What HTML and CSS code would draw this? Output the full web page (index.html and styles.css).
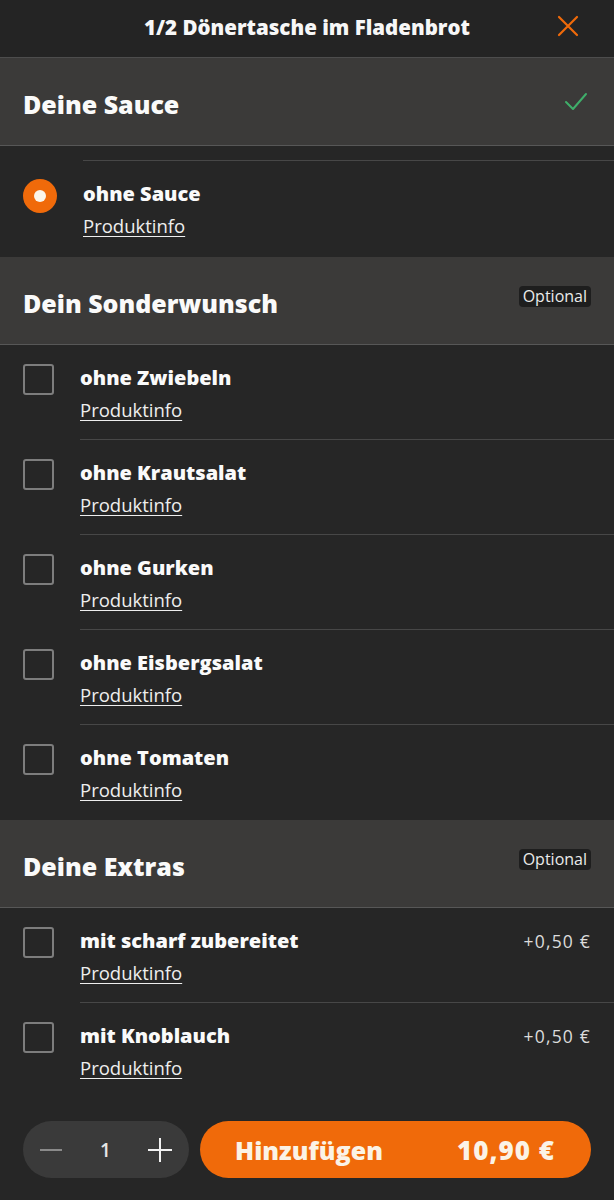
FILE: index.html
```html
<!DOCTYPE html>
<html lang="de">
<head>
<meta charset="utf-8">
<title>1/2 Dönertasche im Fladenbrot</title>
<link rel="stylesheet" href="styles.css">
</head>
<body>
<div class="app">
  <header class="topbar">
    <h1 class="topbar-title">1/2 Dönertasche im Fladenbrot</h1>
    <button class="close" aria-label="Schließen">
      <svg width="24" height="24" viewBox="0 0 24 24"><path d="M3 3 L21 21 M21 3 L3 21" stroke="#f06a0a" stroke-width="2.2" stroke-linecap="round" fill="none"/></svg>
    </button>
  </header>

  <section class="group">
    <div class="group-head">
      <h2 class="group-title">Deine Sauce</h2>
      <svg class="check" width="24" height="20" viewBox="0 0 24 20"><path d="M2 10 L9 17 L22 2" stroke="#3fae6a" stroke-width="2" fill="none" stroke-linecap="round" stroke-linejoin="round"/></svg>
    </div>
    <div class="spacer"><div class="spacer-line"></div></div>
    <div class="item item-radio">
      <div class="ctrl"><span class="radio"></span></div>
      <div class="body last">
        <div class="name">ohne Sauce</div>
        <a class="info" href="#">Produktinfo</a>
      </div>
    </div>
  </section>

  <section class="group">
    <div class="group-head">
      <h2 class="group-title">Dein Sonderwunsch</h2>
      <span class="badge">Optional</span>
    </div>
    <div class="item">
      <div class="ctrl"><span class="box"></span></div>
      <div class="body"><div class="name">ohne Zwiebeln</div><a class="info" href="#">Produktinfo</a></div>
    </div>
    <div class="item">
      <div class="ctrl"><span class="box"></span></div>
      <div class="body"><div class="name">ohne Krautsalat</div><a class="info" href="#">Produktinfo</a></div>
    </div>
    <div class="item">
      <div class="ctrl"><span class="box"></span></div>
      <div class="body"><div class="name">ohne Gurken</div><a class="info" href="#">Produktinfo</a></div>
    </div>
    <div class="item">
      <div class="ctrl"><span class="box"></span></div>
      <div class="body"><div class="name">ohne Eisbergsalat</div><a class="info" href="#">Produktinfo</a></div>
    </div>
    <div class="item">
      <div class="ctrl"><span class="box"></span></div>
      <div class="body last"><div class="name">ohne Tomaten</div><a class="info" href="#">Produktinfo</a></div>
    </div>
  </section>

  <section class="group">
    <div class="group-head">
      <h2 class="group-title">Deine Extras</h2>
      <span class="badge">Optional</span>
    </div>
    <div class="item">
      <div class="ctrl"><span class="box"></span></div>
      <div class="body">
        <div class="row"><div class="name">mit scharf zubereitet</div><span class="price">+0,50 €</span></div>
        <a class="info" href="#">Produktinfo</a>
      </div>
    </div>
    <div class="item">
      <div class="ctrl"><span class="box"></span></div>
      <div class="body last">
        <div class="row"><div class="name">mit Knoblauch</div><span class="price">+0,50 €</span></div>
        <a class="info" href="#">Produktinfo</a>
      </div>
    </div>
  </section>

  <footer class="footer">
    <div class="stepper">
      <svg width="26" height="26" viewBox="0 0 26 26"><path d="M2 13 H24" stroke="#8a8a8a" stroke-width="2"/></svg>
      <span class="qty">1</span>
      <svg width="26" height="26" viewBox="0 0 26 26"><path d="M1 13 H25 M13 1 V25" stroke="#f2f2f2" stroke-width="2"/></svg>
    </div>
    <button class="add">
      <span>Hinzufügen</span>
      <span class="total">10,90 €</span>
    </button>
  </footer>
</div>
</body>
</html>
```

FILE: styles.css
```css
* { box-sizing: border-box; }
html, body { margin: 0; padding: 0; }
body {
  background: #262626;
  color: #f5f5f5;
  font-family: "Open Sans", "Noto Sans", sans-serif;
  width: 614px;
}
.app { display: flex; flex-direction: column; }

.topbar {
  height: 58px;
  display: flex;
  align-items: center;
  justify-content: center;
  position: relative;
  background: #242424;
  border-bottom: 1px solid #4d4d4d;
}
.topbar-title {
  margin: 0;
  font-size: 20.5px;
  font-weight: 800;
  color: #f7f7f7;
  padding-bottom: 4px;
}
.close {
  position: absolute;
  right: 34px;
  top: 14px;
  background: none;
  border: 0;
  padding: 0;
  width: 24px;
  height: 24px;
}

.group-head {
  height: 88px;
  background: #3b3a39;
  border-bottom: 1px solid #575757;
  display: flex;
  justify-content: space-between;
  align-items: flex-start;
  padding: 0 23px 0 23px;
}
.group-title {
  margin: 0;
  font-size: 25px;
  font-weight: 800;
  line-height: 32px;
  padding-top: 30px;
  color: #fafafa;
}
.check { margin-top: 34px; margin-right: 3px; }
.badge {
  margin-top: 29px;
  background: #1e1e1e;
  color: #eaeaea;
  font-size: 16px;
  line-height: 21px;
  padding: 0 4px;
  border-radius: 4px;
}

.spacer { height: 15px; display: flex; align-items: flex-end; padding-left: 83px; }
.spacer-line { flex: 1; border-bottom: 1px solid #474747; }

.item { display: flex; }
.ctrl { width: 80px; padding-left: 23px; padding-top: 19px; flex: none; }
.item-radio .ctrl { width: 83px; padding-top: 18px; }
.box {
  display: block;
  width: 31px;
  height: 31px;
  border: 2px solid #7d7d7d;
  border-radius: 3px;
}
.radio {
  display: block;
  width: 34px;
  height: 34px;
  border-radius: 50%;
  background: #f06a0a;
  position: relative;
}
.radio::after {
  content: "";
  position: absolute;
  left: 11px; top: 11px;
  width: 12px; height: 12px;
  border-radius: 50%;
  background: #fbf5ea;
}
.body {
  flex: 1;
  padding: 19px 23px 17px 0;
  border-bottom: 1px solid #474747;
  display: flex;
  flex-direction: column;
  align-items: flex-start;
}
.body.last { border-bottom: 0; padding-bottom: 18px; }
.item-radio .body.last { padding-bottom: 19px; }
.row { display: flex; justify-content: space-between; align-items: center; width: 100%; }
.name {
  font-size: 20px;
  font-weight: 800;
  line-height: 28px;
  color: #fafafa;
}
.price { font-size: 17.5px; letter-spacing: 1.2px; color: #dcdcdc; padding-right: 0; }
.info {
  margin-top: 6px;
  font-size: 18.5px;
  line-height: 24px;
  color: #eeeeee;
  text-decoration: underline;
  text-underline-offset: 3px;
}

.footer {
  display: flex;
  gap: 11px;
  padding: 23px 23px 22px 23px;
  background: #262626;
}
.stepper {
  width: 166px;
  height: 57px;
  border-radius: 29px;
  background: #3a3a3a;
  display: flex;
  align-items: center;
  justify-content: space-between;
  padding: 0 16px 0 15px;
}
.qty { font-size: 19px; color: #e6e6e6; font-weight: 600; }
.add {
  flex: 1;
  height: 57px;
  border: 0;
  border-radius: 29px;
  background: #f06a0a;
  color: #fbf3e6;
  font-family: inherit;
  font-size: 25px;
  font-weight: 800;
  display: flex;
  align-items: center;
  justify-content: space-between;
  padding: 0 36px 0 35px;
}
.total { font-size: 26px; letter-spacing: 1px; }
```
